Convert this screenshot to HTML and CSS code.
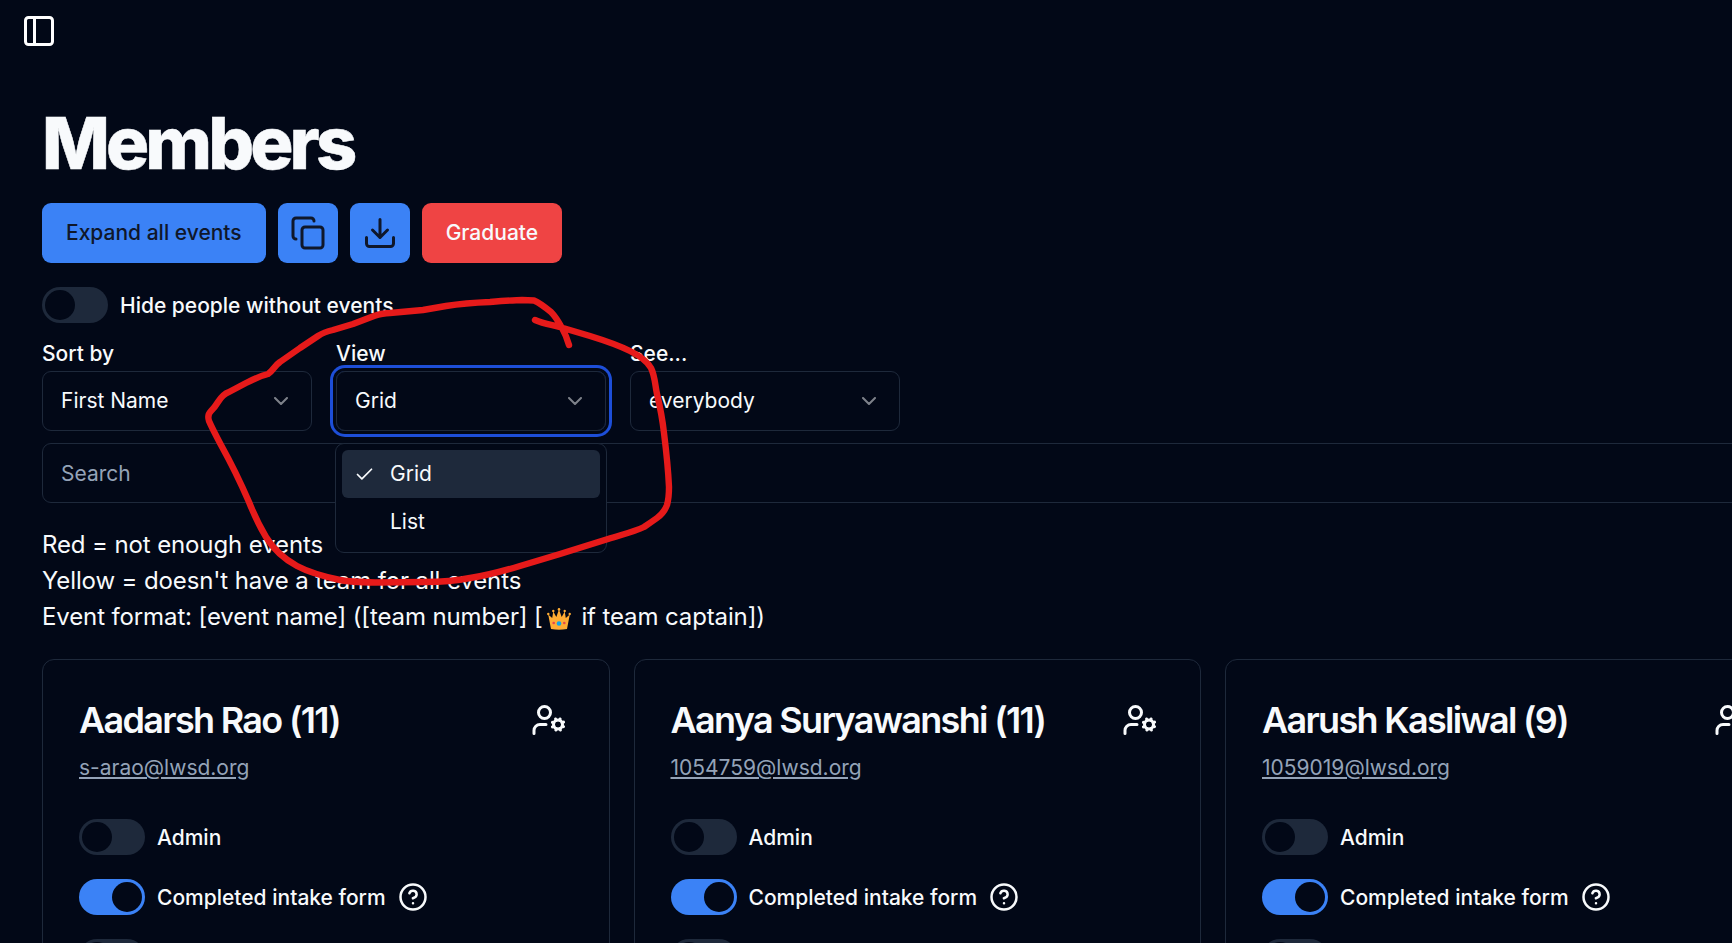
FILE: index.html
```html
<!DOCTYPE html>
<html lang="en">
<head>
<meta charset="utf-8">
<title>Members</title>
<link rel="stylesheet" href="styles.css">
</head>
<body>
<svg class="sprite" aria-hidden="true">
  <symbol id="user-cog" viewBox="0 0 24 24"><circle cx="18" cy="15" r="3"/><circle cx="9" cy="7" r="4"/><path d="M10 15H6a4 4 0 0 0-4 4v2M21.7 16.4l-.9-.3M15.2 13.9l-.9-.3M16.6 18.7l.3-.9M19.1 12.2l.3-.9M19.6 18.7l-.4-1M16.8 12.3l-.4-1M14.3 16.6l1-.4M20.7 13.8l1-.4"/></symbol>
  <symbol id="help" viewBox="0 0 24 24"><circle cx="12" cy="12" r="10"/><path d="M9.09 9a3 3 0 0 1 5.83 1c0 2-3 3-3 3M12 17h.01"/></symbol>
  <symbol id="chevron" viewBox="0 0 24 24"><path d="m6 9 6 6 6-6"/></symbol>
</svg>
<header class="topbar">
  <svg class="icon icon-lg" viewBox="0 0 24 24"><rect width="18" height="18" x="3" y="3" rx="2"/><path d="M9 3v18"/></svg>
</header>
<main class="page">
  <h1 class="title">Members</h1>
  <div class="actions">
    <button class="btn btn-primary">Expand all events</button>
    <button class="btn btn-primary btn-icon" aria-label="Copy"><svg class="icon icon-lg" viewBox="0 0 24 24"><rect width="14" height="14" x="8" y="8" rx="2"/><path d="M4 16c-1.1 0-2-.9-2-2V4c0-1.1.9-2 2-2h10c1.1 0 2 .9 2 2"/></svg></button>
    <button class="btn btn-primary btn-icon" aria-label="Download"><svg class="icon icon-lg" viewBox="0 0 24 24"><path d="M21 15v4a2 2 0 0 1-2 2H5a2 2 0 0 1-2-2v-4M7 10l5 5 5-5M12 15V3"/></svg></button>
    <button class="btn btn-danger">Graduate</button>
  </div>
  <div class="row hide-row"><span class="switch"></span><span class="label">Hide people without events</span></div>
  <div class="filters">
    <div class="field"><span class="label">Sort by</span><div class="select">First Name<svg class="icon chevron"><use href="#chevron"/></svg></div></div>
    <div class="field"><span class="label">View</span><div class="select select-open">Grid<svg class="icon chevron"><use href="#chevron"/></svg></div>
      <div class="menu">
        <div class="option option-active"><svg class="icon check" viewBox="0 0 24 24"><path d="M20 6 9 17l-5-5"/></svg>Grid</div>
        <div class="option">List</div>
      </div>
    </div>
    <div class="field"><span class="label">See...</span><div class="select">everybody<svg class="icon chevron"><use href="#chevron"/></svg></div></div>
  </div>
  <input class="search" placeholder="Search">
  <div class="legend">
    <p>Red = not enough events</p>
    <p>Yellow = doesn't have a team for all events</p>
    <p>Event format: [event name] ([team number] [<svg class="crown" viewBox="0 0 24 22"><path fill="#ffac33" d="M4 21 1.2 6.5 5.2 10 6.3 3.5 9.3 9 12 1.5 14.7 9 17.7 3.5 18.8 10 22.8 6.5 20 21Q12 22.5 4 21Z"/><g fill="#ffac33"><circle cx="1.3" cy="6" r="1.2"/><circle cx="6.3" cy="3" r="1.2"/><circle cx="12" cy="1.4" r="1.3"/><circle cx="17.7" cy="3" r="1.2"/><circle cx="22.7" cy="6" r="1.2"/></g><circle cx="12" cy="15.5" r="2.3" fill="#0ea5e9"/><circle cx="6.7" cy="15" r="1.3" fill="#e5484d"/><circle cx="17.3" cy="15" r="1.3" fill="#e5484d"/></svg> if team captain])</p>
  </div>
  <div class="cards">
    <article class="card">
      <div class="card-head"><h2 class="name">Aadarsh Rao (11)</h2><svg class="icon icon-lg"><use href="#user-cog"/></svg></div>
      <a class="email">s-arao@lwsd.org</a>
      <div class="toggles">
        <div class="row"><span class="switch"></span><span class="label">Admin</span></div>
        <div class="row"><span class="switch switch-on"></span><span class="label">Completed intake form</span><svg class="icon help"><use href="#help"/></svg></div>
        <div class="row"><span class="switch"></span></div>
      </div>
    </article>
    <article class="card">
      <div class="card-head"><h2 class="name">Aanya Suryawanshi (11)</h2><svg class="icon icon-lg"><use href="#user-cog"/></svg></div>
      <a class="email">1054759@lwsd.org</a>
      <div class="toggles">
        <div class="row"><span class="switch"></span><span class="label">Admin</span></div>
        <div class="row"><span class="switch switch-on"></span><span class="label">Completed intake form</span><svg class="icon help"><use href="#help"/></svg></div>
        <div class="row"><span class="switch"></span></div>
      </div>
    </article>
    <article class="card">
      <div class="card-head"><h2 class="name">Aarush Kasliwal (9)</h2><svg class="icon icon-lg"><use href="#user-cog"/></svg></div>
      <a class="email">1059019@lwsd.org</a>
      <div class="toggles">
        <div class="row"><span class="switch"></span><span class="label">Admin</span></div>
        <div class="row"><span class="switch switch-on"></span><span class="label">Completed intake form</span><svg class="icon help"><use href="#help"/></svg></div>
        <div class="row"><span class="switch"></span></div>
      </div>
    </article>
  </div>
</main>
<svg class="scribble" viewBox="0 0 1732 943"><path d="M535 320C544 324 553 325 563 328L590 336Q616 344 630 351Q646 359 651 368C655 376 655 385 657 394Q662 415 664 433Q668 465 669 487Q669 498 667 505Q664 513 657 518Q650 523 644 527C634 532 620 535 608 539L560 554L520 566Q490 575 470 578Q450 582 425 582L375 582.5Q350 582 340 580Q312 574 297 566Q277 555 266 537Q257 522 249 502Q236 472 221 445Q212 428 209 421Q207 415 211 411Q215 407 218 402Q223 394 229 392L246 383Q260 376 268 374C273 371 274 366 280 362L300 348L318 336Q324 332 333 330L353 324L374 316Q383 313 390 313L423 310L446 306Q465 303 490 302Q515 300 522 300L534 300.500Q540 303 551 312Q556 317 562 328Q566 335 569 345"/></svg>
</body>
</html>
```
FILE: styles.css
```css
* { box-sizing: border-box; margin: 0; }

body {
  height: 943px;
  overflow: hidden;
  background: #020817;
  color: #f8fafc;
  font: 24px/36px Inter, "Liberation Sans", sans-serif;
}

.sprite { display: none; }

.icon {
  flex: none;
  fill: none;
  stroke: currentColor;
  stroke-width: 2;
  stroke-linecap: round;
  stroke-linejoin: round;
}
.icon-lg { width: 36px; height: 36px; }

.topbar { display: flex; padding: 13px 21px 0; height: 107px; color: #fff; }

.page { width: 1751px; padding-left: 42px; overflow: visible; }

.title {
  font-size: 72px;
  line-height: 72px;
  font-weight: 800;
  letter-spacing: -3.9px;
  -webkit-text-stroke: .5px currentColor;
}

.actions { display: flex; gap: 12px; margin-top: 24px; }
.btn {
  height: 60px;
  padding: 0 24px;
  border: 0;
  border-radius: 9px;
  font: 500 21px/30px Inter, sans-serif;
}
.btn-primary { background: #3b82f6; color: #0f172a; }
.btn-danger { background: #ef4444; color: #f8fafc; }
.btn-icon { width: 60px; padding: 12px; display: flex; }

.row { display: flex; align-items: center; gap: 12px; height: 36px; }
.hide-row { margin-top: 24px; }

.label { font-size: 21px; line-height: 21px; font-weight: 500; }

.switch {
  flex: none;
  width: 66px;
  height: 36px;
  padding: 3px;
  border-radius: 18px;
  background: #1e293b;
}
.switch::before {
  content: "";
  display: block;
  width: 30px;
  height: 30px;
  border-radius: 50%;
  background: #020817;
}
.switch-on { background: #3b82f6; }
.switch-on::before { margin-left: 30px; }

.filters { display: flex; gap: 24px; margin-top: 20px; }
.field { position: relative; width: 270px; display: flex; flex-direction: column; gap: 7px; }
.select {
  display: flex;
  align-items: center;
  justify-content: space-between;
  height: 60px;
  padding: 0 18px;
  border: 1px solid #1e293b;
  border-radius: 9px;
  font-size: 21px;
}
.select-open { box-shadow: 0 0 0 3px #020817, 0 0 0 6px #1d4ed8; }
.chevron { width: 24px; height: 24px; opacity: .5; }

.menu {
  position: absolute;
  top: 100px;
  left: -1px;
  z-index: 2;
  width: 272px;
  height: 110px;
  padding: 6px;
  border: 1px solid #1e293b;
  border-radius: 9px;
  background: #020817;
}
.option {
  display: flex;
  align-items: center;
  height: 48px;
  padding-left: 48px;
  border-radius: 6px;
  font-size: 21px;
}
.option-active { padding-left: 12px; gap: 15px; background: #1e293b; }
.check { width: 21px; height: 21px; }

.search {
  display: block;
  width: 100%;
  height: 60px;
  margin-top: 12px;
  padding: 0 18px;
  border: 1px solid #1e293b;
  border-radius: 9px;
  background: transparent;
  font: 21px/30px Inter, sans-serif;
}
.search::placeholder { color: #94a3b8; opacity: 1; }

.legend { margin-top: 24px; letter-spacing: -.12px; }
.crown { width: 24px; height: 22px; margin: 0 4px 0 4px; vertical-align: -5px; }

.cards { display: grid; grid-template-columns: repeat(3, 567.5px); gap: 24px; margin-top: 24px; }
.card {
  height: 420px;
  padding: 36px;
  border: 1px solid #1e293b;
  border-radius: 12px;
}
.card-head { display: flex; align-items: center; justify-content: space-between; height: 48px; padding-right: 6px; }
.name { font-size: 36px; line-height: 36px; font-weight: 600; letter-spacing: -1.68px; }
.email {
  display: block;
  margin-top: 9px;
  color: #94a3b8;
  font-size: 21px;
  line-height: 30px;
  text-decoration: underline;
}
.toggles { display: flex; flex-direction: column; gap: 24px; margin-top: 36px; }
.help { width: 30px; height: 30px; }

.scribble {
  position: absolute;
  inset: 0;
  z-index: 5;
  width: 1732px;
  height: 943px;
  fill: none;
  stroke: #e61a1a;
  stroke-width: 6.4;
  stroke-linecap: round;
  stroke-linejoin: round;
  pointer-events: none;
}
```
